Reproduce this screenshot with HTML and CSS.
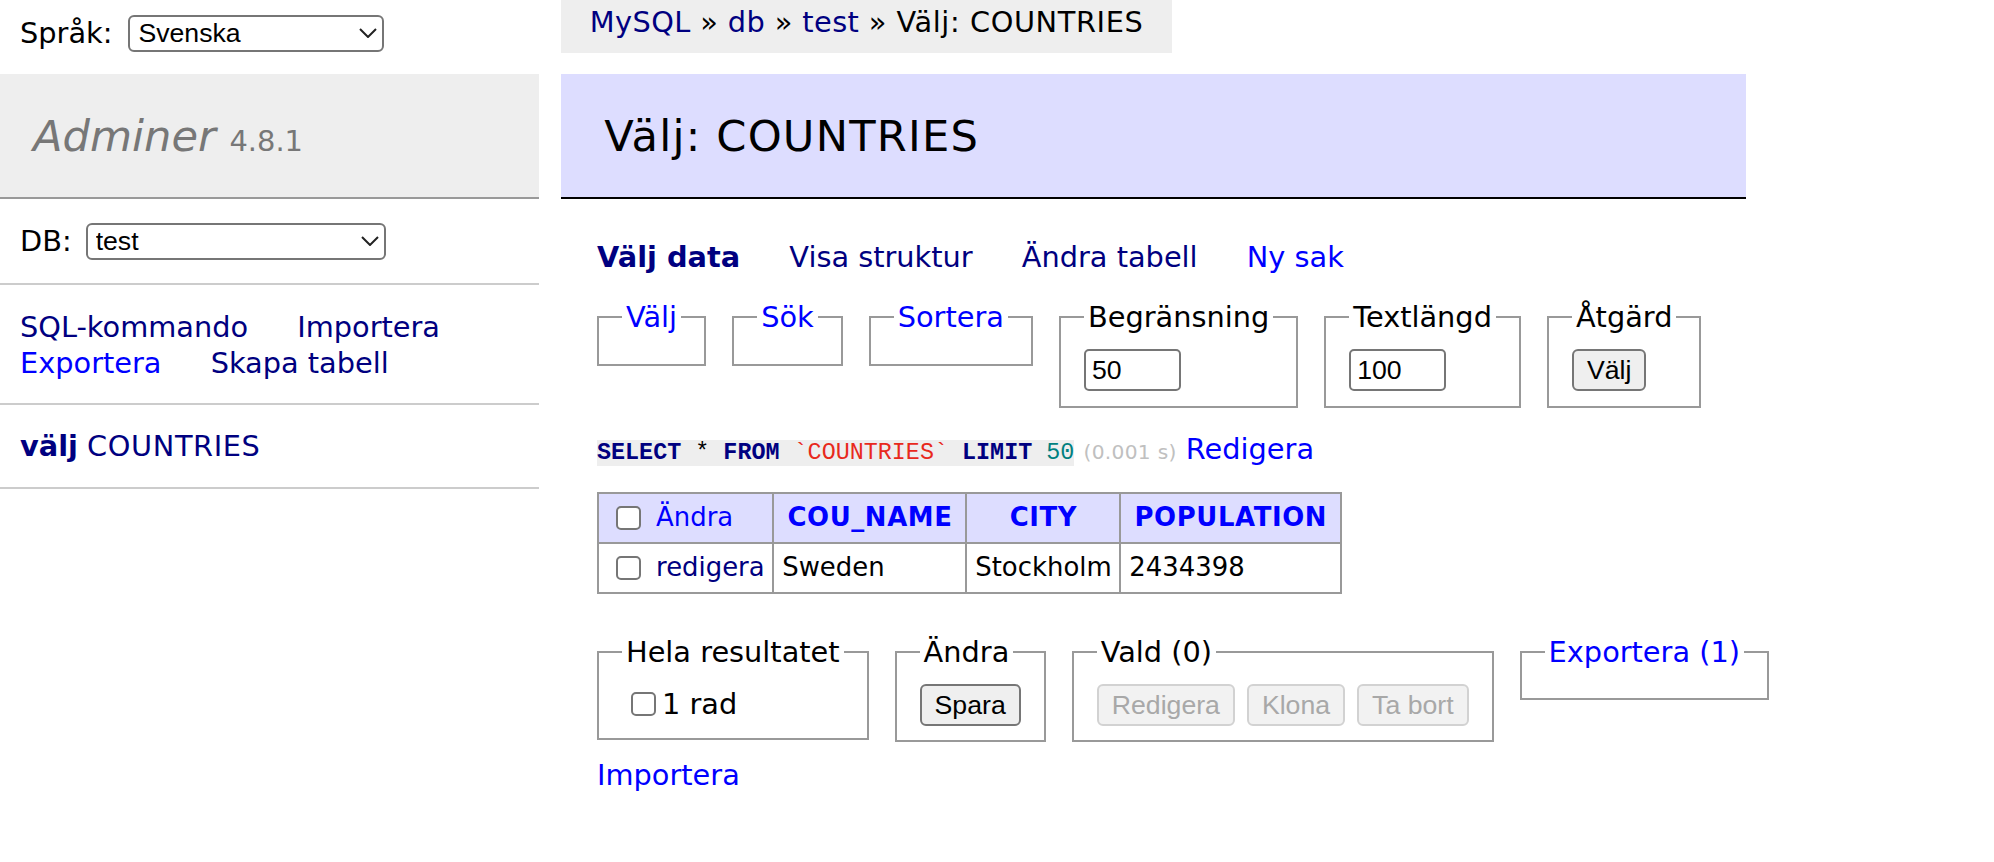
FILE: index.html
```html
<!DOCTYPE html>
<html lang="sv">
<head>
<meta charset="utf-8">
<title>Välj: COUNTRIES - test - Adminer</title>
<link rel="stylesheet" href="styles.css">
</head>
<body>
<div class="page">
  <form class="lang">
    <label class="lang-label" for="lang">Språk:</label>
    <span class="select-wrap lang-select">
      <select id="lang"><option>Svenska</option></select>
      <svg class="chev" viewBox="0 0 18 10" width="18" height="10"><path d="M1 1l8 8 8-8" fill="none" stroke="#222" stroke-width="2"/></svg>
    </span>
  </form>
  <div class="crumb-cell">
    <p class="breadcrumb"><a class="visited" href="#">MySQL</a> » <a class="visited" href="#">db</a> » <a class="visited" href="#">test</a> » <span class="wide">Välj: COUNTRIES</span></p>
  </div>

  <nav class="menu">
    <h1><a class="h1link" href="#">Adminer</a> <span class="version">4.8.1</span></h1>
    <form class="menu-p dbs">
      <label for="db">DB:</label>
      <span class="select-wrap db-select">
        <select id="db"><option>test</option></select>
        <svg class="chev" viewBox="0 0 18 10" width="18" height="10"><path d="M1 1l8 8 8-8" fill="none" stroke="#222" stroke-width="2"/></svg>
      </span>
    </form>
    <p class="menu-p menu-links"><a class="visited" href="#">SQL-kommando</a> <a class="visited" href="#">Importera</a> <a href="#">Exportera</a> <a class="visited" href="#">Skapa tabell</a></p>
    <ul class="tables">
      <li><a class="visited active" href="#">välj</a> <a class="visited wide" href="#">COUNTRIES</a></li>
    </ul>
  </nav>

  <main class="content">
    <h2>Välj: COUNTRIES</h2>
    <p class="tabs"><a class="visited active" href="#">Välj data</a> <a class="visited" href="#">Visa struktur</a> <a class="visited" href="#">Ändra tabell</a> <a href="#">Ny sak</a></p>

    <form class="select-form">
      <div class="fieldsets">
        <fieldset><legend><a href="#">Välj</a></legend></fieldset>
        <fieldset><legend><a href="#">Sök</a></legend></fieldset>
        <fieldset><legend><a href="#">Sortera</a></legend></fieldset>
        <fieldset><legend>Begränsning</legend><input class="field" type="text" value="50"></fieldset>
        <fieldset><legend>Textlängd</legend><input class="field" type="text" value="100"></fieldset>
        <fieldset><legend>Åtgärd</legend><button class="btn btn-valj" type="button">Välj</button></fieldset>
      </div>
    </form>

    <p class="query"><code><span class="kw">SELECT</span> * <span class="kw">FROM</span> <span class="bac">`COUNTRIES`</span> <span class="kw">LIMIT</span> <span class="num">50</span></code> <span class="time">(0.001 s)</span> <a href="#">Redigera</a></p>

    <table class="data">
      <thead>
        <tr>
          <td><input class="cb" type="checkbox"> <a href="#">Ändra</a></td>
          <th><a href="#">COU_NAME</a></th>
          <th><a href="#">CITY</a></th>
          <th><a href="#">POPULATION</a></th>
        </tr>
      </thead>
      <tbody>
        <tr>
          <td><input class="cb" type="checkbox"> <a class="visited" href="#">redigera</a></td>
          <td>Sweden</td>
          <td>Stockholm</td>
          <td>2434398</td>
        </tr>
      </tbody>
    </table>

    <div class="footer">
      <div class="fieldsets footer-sets">
        <fieldset><legend>Hela resultatet</legend><label class="check-label"><input class="cb cb-small" type="checkbox">1 rad</label></fieldset>
        <fieldset><legend>Ändra</legend><button class="btn" type="button">Spara</button></fieldset>
        <fieldset><legend>Vald (0)</legend>
          <div class="btn-row">
            <button class="btn" type="button" disabled>Redigera</button>
            <button class="btn" type="button" disabled>Klona</button>
            <button class="btn" type="button" disabled>Ta bort</button>
          </div>
        </fieldset>
        <fieldset><legend><a href="#">Exportera (1)</a></legend></fieldset>
      </div>
    </div>
    <p class="import"><a href="#">Importera</a></p>
  </main>
</div>
</body>
</html>
```

FILE: styles.css
```css
body {
  margin: 0;
  font: 28.8px/36px "DejaVu Sans", Verdana, sans-serif;
  color: #000;
  background: #fff;
}

a {
  color: #0000ff;
  text-decoration: none;
}

a.visited {
  color: #000080;
}

a.active {
  font-weight: bold;
}

.wide {
  letter-spacing: 0.6px;
}

.page {
  display: grid;
  grid-template-columns: 539px 1225px;
  grid-template-rows: 74px auto;
  column-gap: 22px;
}

/* language switcher */
.lang {
  display: flex;
  align-items: center;
  gap: 16px;
  height: 66px;
  margin: 0;
  padding-left: 20px;
}

.select-wrap {
  position: relative;
  display: block;
}

.select-wrap select {
  -webkit-appearance: none;
  appearance: none;
  display: block;
  box-sizing: border-box;
  height: 37px;
  margin: 0;
  padding: 0 0 0 8px;
  border: 2px solid #767676;
  border-radius: 6px;
  background: #fff;
  color: #000;
  font: 26.67px "Liberation Sans", Arial, sans-serif;
}

.lang-select select {
  width: 256px;
}

.db-select select {
  width: 300px;
}

.chev {
  position: absolute;
  right: 7px;
  top: 50%;
  margin-top: -5px;
  pointer-events: none;
}

/* breadcrumb */
.breadcrumb {
  width: fit-content;
  height: 53px;
  margin: 0;
  padding: 0 28.8px;
  line-height: 44px;
  white-space: nowrap;
  background: #eee;
  letter-spacing: 0.4px;
}

/* left menu */
.menu h1 {
  margin: 0;
  padding: 34.56px 33px;
  font-size: 43.2px;
  line-height: 54px;
  font-weight: normal;
  color: #777;
  background: #eee;
  border-bottom: 2px solid #999;
}

.h1link {
  color: #777;
  font-style: italic;
}

.version {
  font-size: 28.9px;
  line-height: 1;
  color: #777;
}

.menu-p {
  margin: 0;
  padding: 23px 20px;
  border-bottom: 2px solid #ccc;
}

.dbs {
  display: flex;
  align-items: center;
  gap: 14px;
  height: 38px;
  box-sizing: content-box;
}

.menu-links {
  padding-top: 24px;
  padding-bottom: 22px;
}

.menu-links a {
  margin-right: 40px;
  white-space: nowrap;
}

.tables {
  margin: 0;
  padding: 23px 20px;
  list-style: none;
  border-bottom: 2px solid #ccc;
  white-space: nowrap;
}

/* content */
.content {
  padding: 0 40px 40px 36px;
}

.content h2 {
  margin: 0 0 40px -36px;
  padding: 34.56px 43.2px;
  font-size: 43.2px;
  line-height: 54px;
  font-weight: normal;
  color: #000;
  background: #ddf;
  border-bottom: 2px solid #000;
  letter-spacing: 1.2px;
}

.tabs {
  margin: 23px 0 0;
}

.tabs a {
  margin-right: 40px;
  white-space: nowrap;
}

.select-form {
  margin: 0;
}

.fieldsets {
  display: flex;
  align-items: flex-start;
  gap: 26px;
  margin-top: 24px;
}

fieldset {
  margin: 0;
  padding: 14.4px 23px;
  border: 2px solid #999;
  min-width: 0;
}

legend {
  padding: 0 4px;
}

.field {
  display: block;
  box-sizing: border-box;
  width: 97px;
  height: 42px;
  margin: 0;
  padding: 0 6px;
  border: 2px solid #767676;
  border-radius: 5px;
  background: #fff;
  color: #000;
  font: 26.67px "Liberation Sans", Arial, sans-serif;
}

.btn {
  display: block;
  box-sizing: border-box;
  height: 42px;
  margin: 0;
  padding: 0 13px;
  border: 2px solid #767676;
  border-radius: 6px;
  background: #efefef;
  color: #000;
  font: 26.67px "Liberation Sans", Arial, sans-serif;
}

.btn:disabled {
  color: #a8a8a8;
  border-color: #d2d2d2;
  background: #f2f2f2;
}

.btn-row {
  display: flex;
  gap: 12px;
}

/* query line */
.query {
  margin: 23px 0 0;
}

.query code {
  font: 23.4px "Liberation Mono", "Courier New", monospace;
  background: #eee;
}

.kw {
  font-weight: bold;
  color: #000080;
}

.bac {
  color: #e8291c;
}

.num {
  color: #008080;
}

.time {
  color: #c0c0c0;
  font-size: 20.2px;
  letter-spacing: 0.3px;
}

/* data table */
.data {
  margin: 22px 0 0;
  border-collapse: collapse;
  font-size: 25.92px;
  line-height: 37.5px;
}

.data td,
.data th {
  border: 2px solid #999;
  padding: 5.2px 7.8px;
  text-align: left;
}

.data thead td,
.data thead th {
  background: #ddf;
}

.data thead th {
  padding: 5.2px 13px;
  text-align: center;
  letter-spacing: 0.6px;
}

.cb {
  -webkit-appearance: none;
  appearance: none;
  box-sizing: border-box;
  width: 25px;
  height: 24px;
  margin: 0 7px 0 9px;
  border: 2px solid #767676;
  border-radius: 5px;
  background: #fff;
  vertical-align: -4px;
}

/* footer */
.footer {
  margin-right: -40px;
  border-top: 40px solid #fff;
  padding-bottom: 15px;
}

.footer-sets {
  margin-top: 0;
}

.check-label {
  display: flex;
  align-items: center;
  height: 40px;
}

.cb-small {
  margin: 0 6px 0 9px;
}

.import {
  margin: 0;
}
```
